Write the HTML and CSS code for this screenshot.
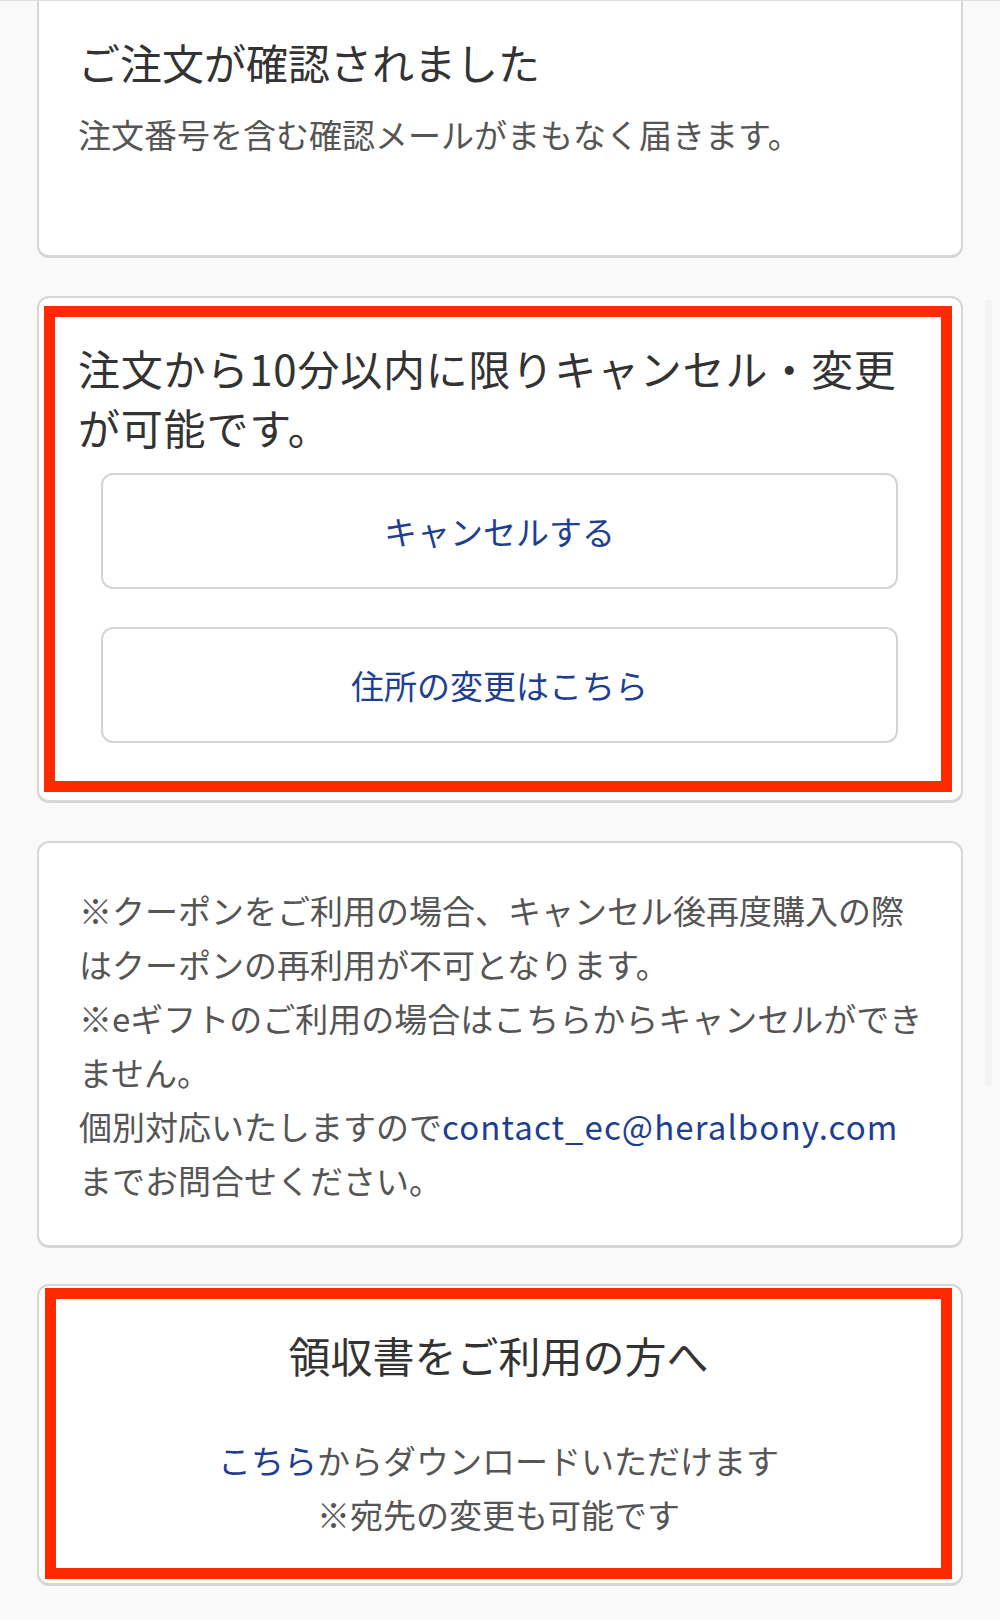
FILE: index.html
```html
<!DOCTYPE html>
<html lang="ja">
<head>
    <meta charset="UTF-8">
    <meta name="viewport" content="width=device-width, initial-scale=1.0">
    <title>ご注文完了</title>
    <link rel="stylesheet" href="styles.css">
</head>
<body>
    <div class="scroll-track"></div>
    <div id="page">
        <section class="card card-first">
            <h1 class="card-title">ご注文が確認されました</h1>
            <p class="card-text">注文番号を含む確認メールがまもなく届きます。</p>
        </section>

        <section class="card">
            <div class="highlight highlight-cancel">
                <h2 class="card-title cancel-title">注文から10分以内に限りキャンセル・変更が可能です。</h2>
                <div class="actions">
                    <a class="action-button" href="#">キャンセルする</a>
                    <a class="action-button" href="#">住所の変更はこちら</a>
                </div>
            </div>
        </section>

        <section class="card card-notes">
            <p class="card-text">
                ※クーポンをご利用の場合、キャンセル後再度購入の際はクーポンの再利用が不可となります。<br>
                ※eギフトのご利用の場合はこちらからキャンセルができません。<br>
                個別対応いたしますので<a class="link email" href="mailto:contact_ec@heralbony.com">contact_ec@heralbony.com</a><br>
                までお問合せください。
            </p>
        </section>

        <section class="card card-receipt">
            <div class="highlight highlight-receipt">
                <h2 class="card-title receipt-title">領収書をご利用の方へ</h2>
                <p class="card-text receipt-text">
                    <a class="link" href="#">こちら</a>からダウンロードいただけます<br>
                    ※宛先の変更も可能です
                </p>
            </div>
        </section>
    </div>
</body>
</html>
```

FILE: styles.css
```css
body {
    font-family: "Noto Sans CJK JP", "Noto Sans", sans-serif;
    background-color: #f9f9f9;
    color: #333;
    margin: 0;
    padding: 0;
}

#page {
    border-top: 1px solid #dedede;
    padding: 0 37px;
}

.scroll-track {
    position: absolute;
    left: 985px;
    top: 300px;
    width: 7px;
    height: 785px;
    background-color: #f2f2f2;
}

.card {
    position: relative;
    background-color: white;
    border: 2px solid #d6d6d6;
    border-bottom-width: 3px;
    border-radius: 12px;
    margin-top: 38px;
}

.card-first {
    margin-top: 0;
    border-top: none;
    border-radius: 0 0 12px 12px;
    padding: 31px 30px 94px 39px;
}

.card-title {
    font-size: 42px;
    font-weight: 400;
    line-height: 60px;
    color: #333;
    margin: 0;
}

.cancel-title {
    line-height: 59px;
    letter-spacing: 0.8px;
}

.card-text {
    font-size: 33px;
    line-height: 54px;
    color: #555;
    margin: 15px 0 0;
}

.highlight {
    border: 11px solid #ff2a00;
}

.highlight-cancel {
    margin: 8px 9px 8px 5px;
    padding: 21px 20px 38px 23px;
}

.actions {
    display: flex;
    flex-direction: column;
    gap: 38px;
    margin: 17px 23px 0 23px;
}

.action-button {
    display: flex;
    align-items: center;
    justify-content: center;
    height: 112px;
    border: 2px solid #d4d4d4;
    border-radius: 12px;
    font-size: 33px;
    color: #1e3f91;
    text-decoration: none;
}

.card-notes {
    padding: 40px 30px 38px 40px;
}

.card-notes .card-text {
    margin: 0;
}

.link {
    color: #1e3f91;
    text-decoration: none;
}

.email {
    letter-spacing: 1.1px;
}

.card-receipt {
    margin-top: 36px;
}

.highlight-receipt {
    margin: 2px 9px 4px 6px;
    padding: 26px 20px 27px;
    text-align: center;
}

.receipt-title {
    line-height: 60px;
}

.receipt-text {
    margin-top: 48px;
    line-height: 54px;
}
```
